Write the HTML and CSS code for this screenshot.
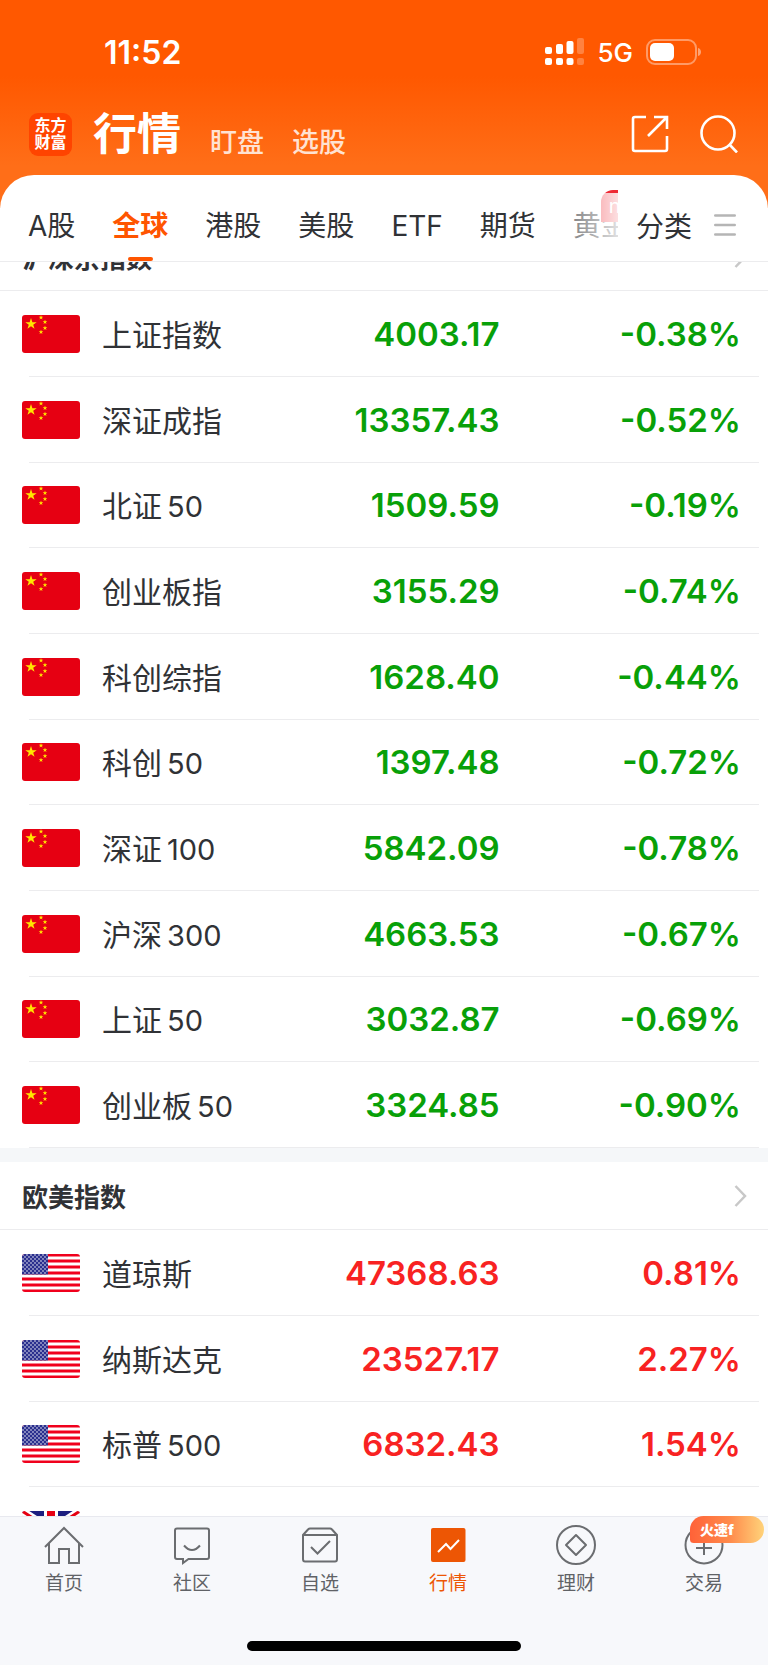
FILE: index.html
```
<!DOCTYPE html>
<html lang="zh-CN">
<head>
<meta charset="utf-8">
<meta name="viewport" content="width=device-width, initial-scale=1">
<title>行情</title>
<link rel="stylesheet" href="styles.css">
</head>
<body>
<svg class="defs" aria-hidden="true">
  <symbol id="star" viewBox="-10 -10 20 20"><path d="M0-10 2.3-3.1 9.5-3.1 3.7 1.2 5.9 8.1 0 3.8-5.9 8.1-3.7 1.2-9.5-3.1-2.3-3.1Z"/></symbol>
  <symbol id="cn" viewBox="0 0 58 38">
    <rect width="58" height="38" fill="#e60012"/>
    <g fill="#ffe600">
      <use href="#star" x="3" y="3" width="12" height="12"/>
      <use href="#star" x="16.500" y="0" width="5" height="5"/>
      <use href="#star" x="20.500" y="4.500" width="5" height="5"/>
      <use href="#star" x="20.500" y="10.500" width="5" height="5"/>
      <use href="#star" x="16.500" y="14.500" width="5" height="5"/>
    </g>
  </symbol>
  <pattern id="dots" width="4" height="4" patternUnits="userSpaceOnUse"><circle cx="1" cy="1" r=".9" fill="#fff"/><circle cx="3" cy="3" r=".9" fill="#fff"/></pattern>
  <symbol id="us" viewBox="0 0 58 38">
    <rect width="58" height="38" fill="#fff"/>
    <path stroke="#f0001c" stroke-width="3" d="M0 1h58M0 7h58M0 13h58M0 19h58M0 25h58M0 31h58M0 37h58"/>
    <rect width="26" height="20.500" fill="#2a2f8e"/>
    <rect width="26" height="20.500" fill="url(#dots)" opacity=".6"/>
  </symbol>
  <symbol id="uk" viewBox="0 0 58 38">
    <rect width="58" height="38" fill="#1d1f80"/>
    <path stroke="#fff" stroke-width="8" d="M0 0 58 38M58 0 0 38"/>
    <path stroke="#e60012" stroke-width="3" d="M0 0 58 38M58 0 0 38"/>
    <path stroke="#fff" stroke-width="14" d="M29 0v38M0 19h58"/>
    <path stroke="#e60012" stroke-width="8" d="M29 0v38M0 19h58"/>
  </symbol>
</svg>

<div class="app">
  <header class="top">
    <div class="status">
      <time class="clock">11:52</time>
      <div class="signals">
        <svg class="cell" viewBox="0 0 40 28" aria-hidden="true">
          <g fill="#fff"><rect y="9" width="7" height="7" rx="2"/><rect x="11" y="6" width="7" height="10" rx="2"/><rect x="21.500" y="3" width="7" height="13" rx="2"/><rect y="20" width="7" height="7" rx="2"/><rect x="11" y="20" width="7" height="7" rx="2"/><rect x="21.500" y="20" width="7" height="7" rx="2"/>
          <g opacity=".25"><rect x="32" width="7" height="16" rx="2"/><rect x="32" y="20" width="7" height="7" rx="2"/></g></g>
        </svg>
        <span class="net">5G</span>
        <svg class="battery" viewBox="0 0 56 26" aria-hidden="true">
          <rect x="1" y="1" width="49" height="24" rx="8" fill="none" stroke="#fff" stroke-width="2" opacity=".4"/>
          <rect x="4" y="4" width="24" height="18" rx="5" fill="#fff"/>
          <path d="M52 9c4 1 4 7 0 8Z" fill="#fff" opacity=".45"/>
        </svg>
      </div>
    </div>
    <div class="titlebar">
      <div class="logo">东方<br>财富</div>
      <h1 class="title">行情</h1>
      <a class="sub" href="#watch">盯盘</a>
      <a class="sub" href="#pick">选股</a>
      <div class="actions">
        <button class="icon-btn" type="button" aria-label="分享">
          <svg viewBox="0 0 38 38" fill="none" stroke="#fff" stroke-width="2.600"><path d="M15 2H4Q2 2 2 4V34Q2 36 4 36H34Q36 36 36 34V21M23 2H36V14M36 2 17 21"/></svg>
        </button>
        <button class="icon-btn" type="button" aria-label="搜索">
          <svg viewBox="0 0 38 38" fill="none" stroke="#fff" stroke-width="2.600"><circle cx="18" cy="18" r="16.500"/><path d="m29 29 8 8.500"/></svg>
        </button>
      </div>
    </div>
  </header>

  <main class="panel">
    <nav class="tabs">
      <div class="tab-scroll">
        <a class="tab" href="#a">A股</a>
        <a class="tab active" href="#global" aria-current="page">全球</a>
        <a class="tab" href="#hk">港股</a>
        <a class="tab" href="#us-stocks">美股</a>
        <a class="tab" href="#etf">ETF</a>
        <a class="tab" href="#futures">期货</a>
        <a class="tab" href="#gold">黄金<span class="new">new</span></a>
      </div>
      <button class="category" type="button">分类
        <svg viewBox="0 0 22 22" stroke="#b5b5b5" stroke-width="2.600" stroke-linecap="round" aria-hidden="true"><path d="M1.300 1.500h19.400M1.300 11h19.400M1.300 20.500h19.400"/></svg>
      </button>
    </nav>

    <div class="list">
      <section class="group scrolled">
        <h2 class="group-head">沪深京指数<svg viewBox="0 0 13 22" aria-hidden="true"><path d="m1.500 1 9.500 10-9.500 10"/></svg></h2>
        <table class="quotes down"><tbody>
          <tr><td><svg class="flag"><use href="#cn"/></svg></td><th scope="row">上证指数</th><td>4003.17</td><td>-0.38%</td></tr>
          <tr><td><svg class="flag"><use href="#cn"/></svg></td><th scope="row">深证成指</th><td>13357.43</td><td>-0.52%</td></tr>
          <tr><td><svg class="flag"><use href="#cn"/></svg></td><th scope="row">北证<span>50</span></th><td>1509.59</td><td>-0.19%</td></tr>
          <tr><td><svg class="flag"><use href="#cn"/></svg></td><th scope="row">创业板指</th><td>3155.29</td><td>-0.74%</td></tr>
          <tr><td><svg class="flag"><use href="#cn"/></svg></td><th scope="row">科创综指</th><td>1628.40</td><td>-0.44%</td></tr>
          <tr><td><svg class="flag"><use href="#cn"/></svg></td><th scope="row">科创<span>50</span></th><td>1397.48</td><td>-0.72%</td></tr>
          <tr><td><svg class="flag"><use href="#cn"/></svg></td><th scope="row">深证<span>100</span></th><td>5842.09</td><td>-0.78%</td></tr>
          <tr><td><svg class="flag"><use href="#cn"/></svg></td><th scope="row">沪深<span>300</span></th><td>4663.53</td><td>-0.67%</td></tr>
          <tr><td><svg class="flag"><use href="#cn"/></svg></td><th scope="row">上证<span>50</span></th><td>3032.87</td><td>-0.69%</td></tr>
          <tr><td><svg class="flag"><use href="#cn"/></svg></td><th scope="row">创业板<span>50</span></th><td>3324.85</td><td>-0.90%</td></tr>
        </tbody></table>
      </section>
      <section class="group">
        <h2 class="group-head">欧美指数<svg viewBox="0 0 13 22" aria-hidden="true"><path d="m1.500 1 9.500 10-9.500 10"/></svg></h2>
        <table class="quotes up"><tbody>
          <tr><td><svg class="flag"><use href="#us"/></svg></td><th scope="row">道琼斯</th><td>47368.63</td><td>0.81%</td></tr>
          <tr><td><svg class="flag"><use href="#us"/></svg></td><th scope="row">纳斯达克</th><td>23527.17</td><td>2.27%</td></tr>
          <tr><td><svg class="flag"><use href="#us"/></svg></td><th scope="row">标普<span>500</span></th><td>6832.43</td><td>1.54%</td></tr>
          <tr><td><svg class="flag"><use href="#uk"/></svg></td><th scope="row"></th><td></td><td></td></tr>
        </tbody></table>
      </section>
    </div>
  </main>

  <footer class="bottom">
    <nav class="dock">
      <a href="#home"><svg viewBox="0 0 40 40"><path d="M1 22 20 3l19 19M5 18.500V38H15V24H25V38H35V18.500"/></svg>首页</a>
      <a href="#community"><svg viewBox="0 0 40 40"><path d="M5 3.500H35Q37 3.500 37 5.500V32Q37 34 35 34H16.500L11 38V34H5Q3 34 3 32V5.500Q3 3.500 5 3.500ZM12 20.500Q20 29.500 28 20.500"/></svg>社区</a>
      <a href="#mine"><svg viewBox="0 0 40 40"><path d="M3 10 8 4.500Q9 3.500 10 3.500H30Q31 3.500 32 4.500L37 10V34Q37 36.500 35 36.500H5Q3 36.500 3 34ZM3 10H37M11 22l6.500 6.500L30 16"/></svg>自选</a>
      <a class="active" href="#market" aria-current="page"><svg viewBox="0 0 40 40"><rect x="3" y="3" width="34.500" height="34" rx="2" fill="#ed5604" stroke="none"/><path d="m10 27 8-8 4.500 5L31 15" stroke="#fff"/></svg>行情</a>
      <a href="#wealth"><svg viewBox="0 0 40 40"><circle cx="20" cy="20" r="19"/><path d="M20 10 30 20 20 30 10 20Z" stroke-linejoin="round"/></svg>理财</a>
      <a href="#trade"><svg viewBox="0 0 40 40"><circle cx="20" cy="20" r="18.500"/><path d="M12 17H28M12 23H28M20 15V30M13 8l7 8 7-8"/></svg>交易<span class="promo">火速f</span></a>
    </nav>
    <div class="home-bar"></div>
  </footer>
</div>
</body>
</html>
```

FILE: styles.css
```
* { box-sizing: border-box; }
body {
  margin: 0;
  font-family: Inter, "Noto Sans CJK SC", sans-serif;
  color: #303236;
  background: #fff;
}
a { color: inherit; text-decoration: none; }
button { border: 0; padding: 0; background: none; font: inherit; color: inherit; }
svg { display: block; }
.defs { position: absolute; width: 0; height: 0; }

.app { display: flex; flex-direction: column; height: 100vh; overflow: hidden; }

/* Header */
.top {
  flex: none;
  height: 208px;
  margin-bottom: -33px;
  color: #fff;
  background: linear-gradient(#ff5800 76px, #ff6e18 166px);
}
.status {
  display: flex;
  justify-content: space-between;
  align-items: center;
  height: 104px;
  padding: 0 66px 0 104px;
}
.clock { font-size: 32px; font-weight: 600; }
.signals { display: flex; align-items: center; }
.cell { width: 40px; height: 28px; margin-right: 12px; }
.net { font-size: 26px; font-weight: 500; margin-right: 13px; }
.battery { width: 56px; height: 26px; }
.titlebar { display: flex; align-items: flex-end; padding: 0 30px 0 29px; height: 60px; }
.logo {
  width: 43px;
  height: 43px;
  margin: 0 21px 8px 0;
  padding-top: 4px;
  border-radius: 9px;
  background: #ff4400;
  font-size: 16px;
  font-weight: 700;
  line-height: 17px;
  text-align: center;
}
.title { margin: 0 29px 0 0; font-size: 44px; font-weight: 700; line-height: 60px; }
.sub { margin-right: 28px; font-size: 27px; font-weight: 500; line-height: 42px; color: #ffe2d2; }
.actions { display: flex; gap: 31px; margin: 0 0 11px auto; }
.icon-btn svg { width: 38px; height: 38px; }

/* Category tabs */
.panel {
  flex: 1;
  min-height: 0;
  display: flex;
  flex-direction: column;
  border-radius: 34px 34px 0 0;
  background: #fff;
  overflow: hidden;
}
.tabs {
  flex: none;
  display: flex;
  height: 87px;
  border-bottom: 1px solid #ececee;
  font-size: 28px;
}
.tab-scroll {
  position: relative;
  flex: 1;
  min-width: 0;
  display: flex;
  gap: 37px;
  padding-left: 28px;
  overflow: hidden;
}
.tab-scroll::after {
  content: "";
  position: absolute;
  top: 18px;
  right: 0;
  bottom: 0;
  width: 46px;
  background: linear-gradient(90deg, rgba(255,255,255,.4), rgba(255,255,255,.85));
}
.tab { position: relative; flex: none; line-height: 102px; }
.tab.active { font-weight: 700; color: #ff5500; }
.tab.active::after {
  content: "";
  position: absolute;
  left: 50%;
  bottom: 0;
  width: 25px;
  height: 4px;
  margin-left: -12px;
  border-radius: 2px;
  background: #ff5500;
}
.new {
  position: absolute;
  top: 15px;
  left: 28px;
  padding: 0 8px;
  border-radius: 12px 12px 12px 0;
  background: #ee2a35;
  color: #fff;
  font-size: 20px;
  line-height: 32px;
}
.category {
  display: flex;
  align-items: center;
  gap: 22px;
  padding: 14px 32px 0 18px;
}
.category svg { width: 22px; height: 22px; }

/* Quote list */
.list { flex: 1; min-height: 0; overflow: hidden; }
.group + .group { border-top: 14px solid #f5f7f9; }
.scrolled { margin-top: -39px; }
.group-head {
  display: flex;
  align-items: center;
  justify-content: space-between;
  height: 68px;
  margin: 0;
  padding: 0 21px 0 22px;
  border-bottom: 1px solid #ececee;
  font-size: 26px;
  font-weight: 600;
}
.group-head svg {
  width: 13px;
  height: 22px;
  fill: none;
  stroke: #c8c8c8;
  stroke-width: 2.5;
}
.quotes, .quotes tbody { display: block; }
.quotes tr {
  position: relative;
  display: grid;
  grid-template-columns: 80px 14fr 14fr 17fr;
  align-items: center;
  height: 86px;
  margin: 0 9px 0 22px;
  padding-right: 18px;
}
.quotes tr:nth-child(3n) { height: 85px; }
.quotes tr::after {
  content: "";
  position: absolute;
  left: 7px;
  right: 0;
  bottom: 0;
  height: 1px;
  background: #ececee;
}
.quotes td, .quotes th { padding: 0; white-space: nowrap; }
.quotes th { padding-bottom: 3px; font-size: 30px; font-weight: 400; text-align: left; }
.quotes th span { margin-left: 5px; font-size: 29px; }
.quotes td { padding-bottom: 1px; font-size: 33px; font-weight: 600; text-align: right; }
.down td { color: #08a008; }
.up td { color: #f82222; }
.flag { width: 58px; height: 38px; border-radius: 3px; }

/* Bottom dock */
.bottom {
  flex: none;
  border-top: 1px solid #e8e9ef;
  background: #f7f8fb;
  padding-bottom: 14px;
}
.dock { display: grid; grid-template-columns: repeat(6, 1fr); }
.dock a {
  position: relative;
  display: flex;
  flex-direction: column;
  align-items: center;
  padding-top: 8px;
  font-size: 19px;
  line-height: 37px;
  color: #606266;
}
.dock svg { width: 40px; height: 40px; fill: none; stroke: #6b6d70; stroke-width: 2; }
.dock .active { color: #ed5604; }
.promo {
  position: absolute;
  top: -1px;
  right: 4px;
  width: 74px;
  height: 27px;
  padding-left: 10px;
  border-radius: 14px 14px 14px 4px;
  background: linear-gradient(90deg, #ff6238, #ff8c4c 55%, #ffd37a);
  color: #fff;
  font-size: 14px;
  font-weight: 900;
  line-height: 27px;
}
.home-bar {
  width: 274px;
  height: 10px;
  margin: 39px auto 0;
  border-radius: 5px;
  background: #000;
}
```
